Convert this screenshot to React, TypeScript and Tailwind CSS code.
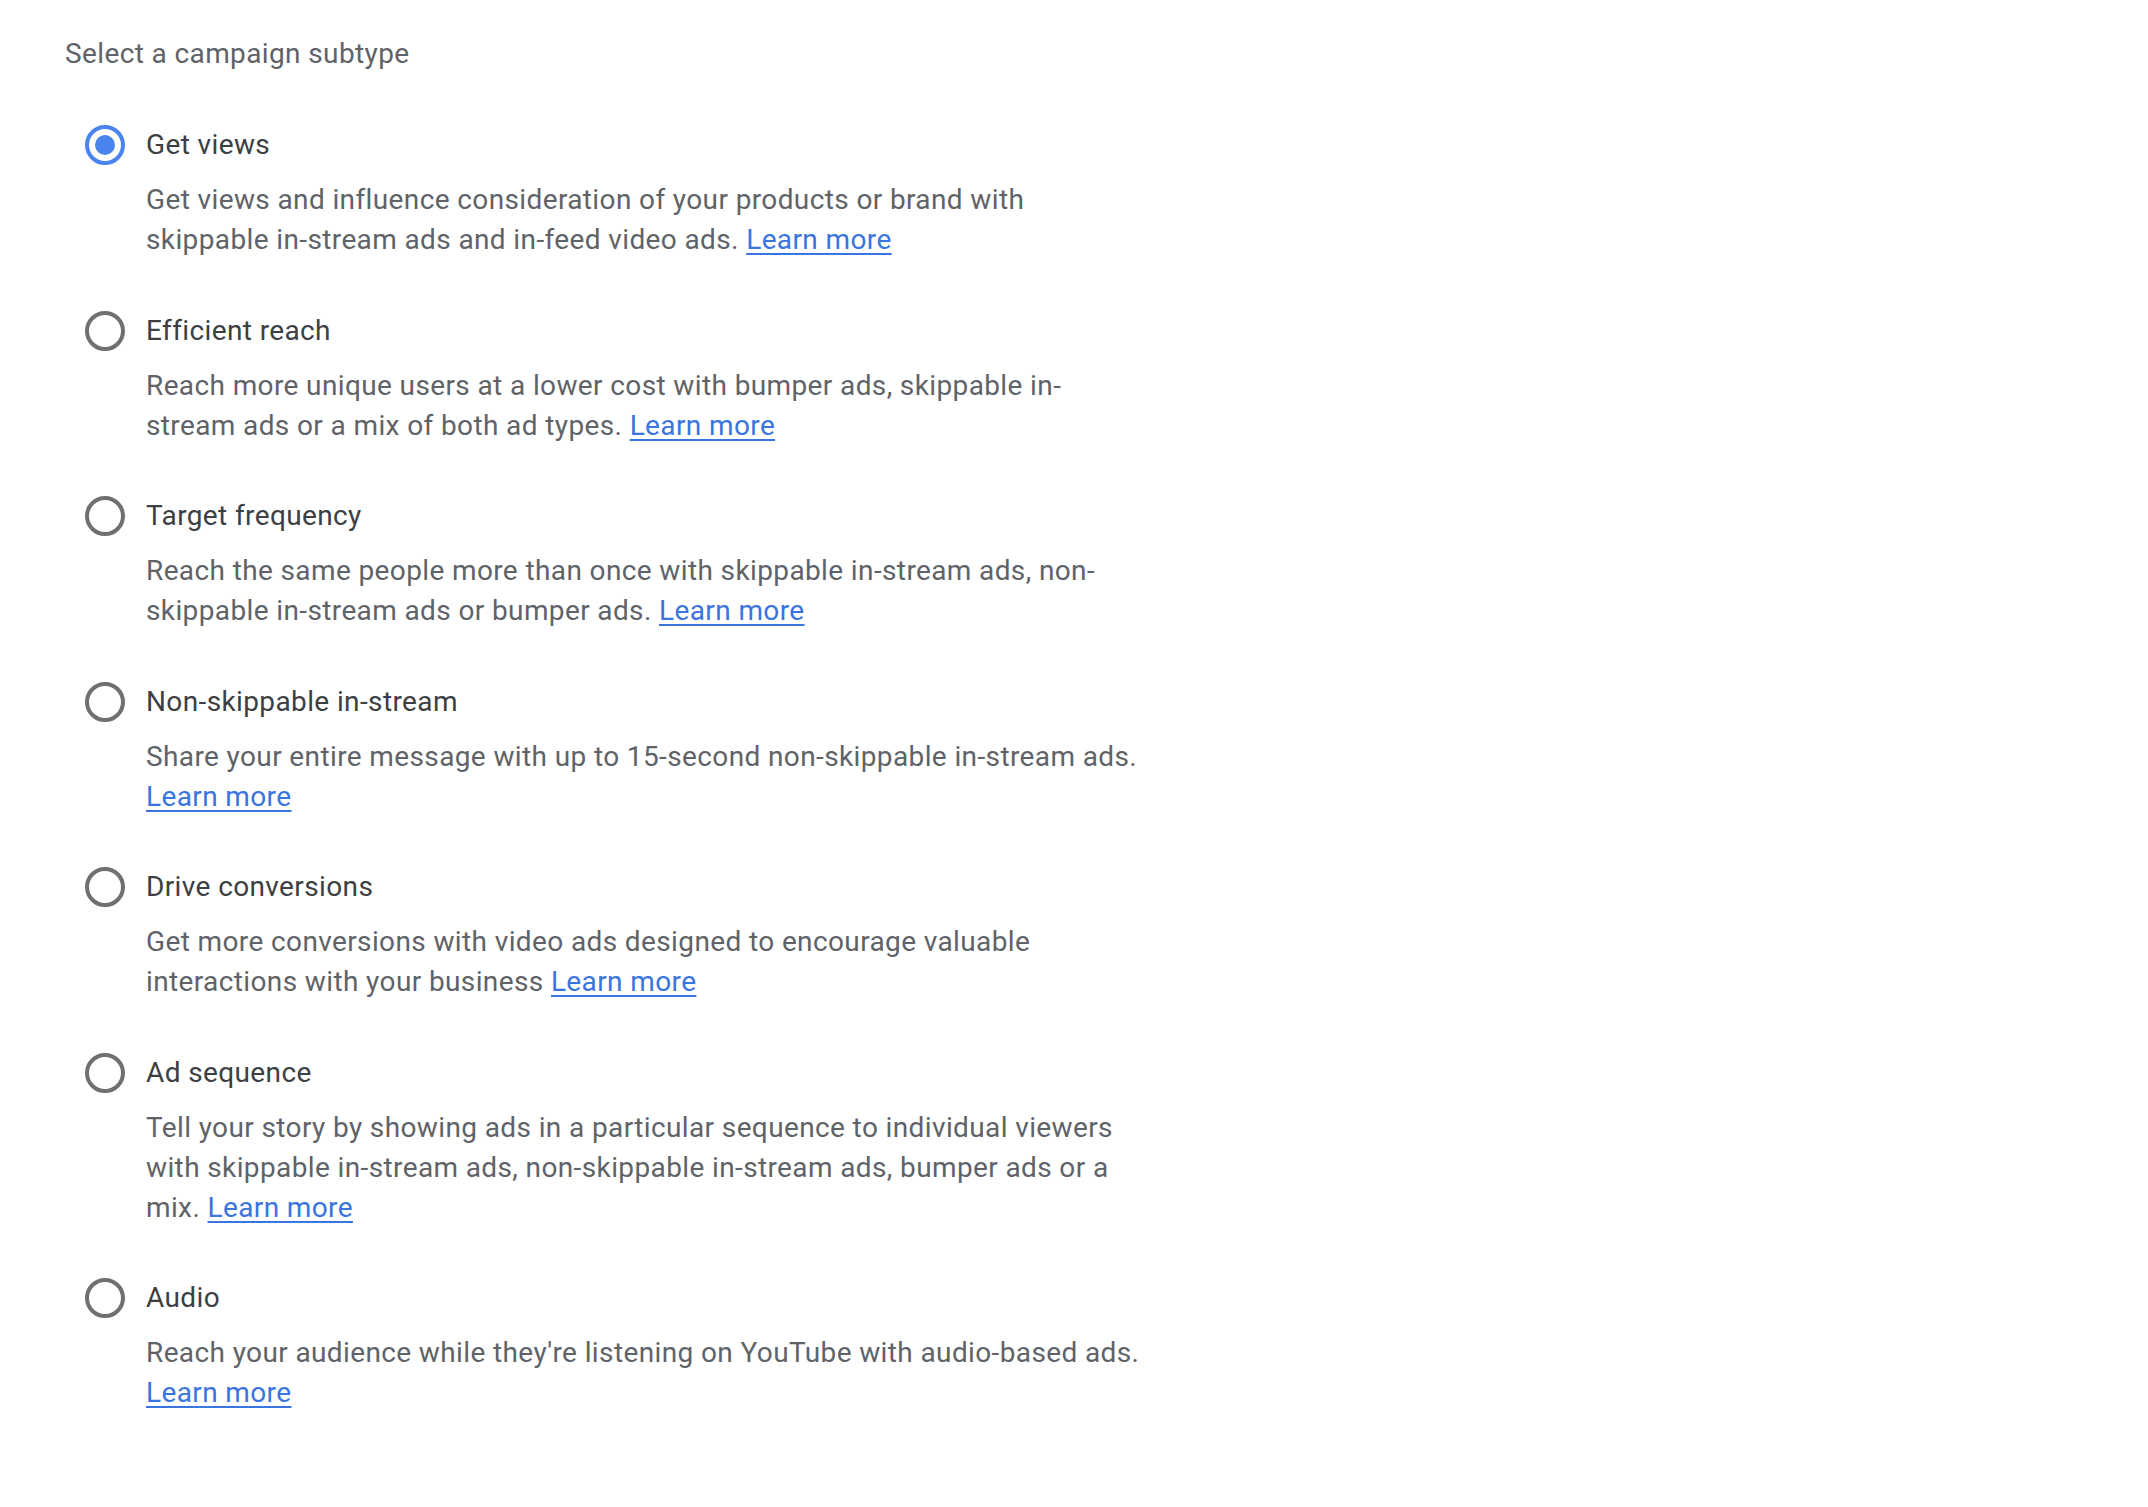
import React, { useState } from 'react';

type Option = {
  id: string;
  label: string;
  description: string;
};

const OPTIONS: Option[] = [
  {
    id: 'views',
    label: 'Get views',
    description:
      'Get views and influence consideration of your products or brand with skippable in-stream ads and in-feed video ads.',
  },
  {
    id: 'reach',
    label: 'Efficient reach',
    description:
      'Reach more unique users at a lower cost with bumper ads, skippable in-stream ads or a mix of both ad types.',
  },
  {
    id: 'frequency',
    label: 'Target frequency',
    description:
      'Reach the same people more than once with skippable in-stream ads, non-skippable in-stream ads or bumper ads.',
  },
  {
    id: 'nonskip',
    label: 'Non-skippable in-stream',
    description: 'Share your entire message with up to 15-second non-skippable in-stream ads.',
  },
  {
    id: 'conversions',
    label: 'Drive conversions',
    description:
      'Get more conversions with video ads designed to encourage valuable interactions with your business',
  },
  {
    id: 'sequence',
    label: 'Ad sequence',
    description:
      'Tell your story by showing ads in a particular sequence to individual viewers with skippable in-stream ads, non-skippable in-stream ads, bumper ads or a mix.',
  },
  {
    id: 'audio',
    label: 'Audio',
    description: "Reach your audience while they're listening on YouTube with audio-based ads.",
  },
];

const Radio: React.FC<{ checked: boolean }> = ({ checked }) => (
  <div
    className={`w-[40px] h-[40px] shrink-0 rounded-full border-[4px] flex items-center justify-center ${
      checked ? 'border-[#4a84ee]' : 'border-[#707070]'
    }`}
  >
    {checked && <div className="w-[20px] h-[20px] rounded-full bg-[#4a84ee]" />}
  </div>
);

export default function App() {
  const [selected, setSelected] = useState('views');

  return (
    <div className="min-h-screen bg-white font-['Roboto',sans-serif] text-[28px] leading-[40px] tracking-[0.38px]">
      <div className="pl-[65px] pt-[34px]">
        <div className="text-[#5f6368]">Select a campaign subtype</div>

        <div className="mt-[51px] pl-[20px] flex flex-col gap-[50.5px]">
          {OPTIONS.map((opt) => (
            <div key={opt.id} className="flex flex-col">
              <label
                className="flex items-center gap-[21px] cursor-pointer"
                onClick={() => setSelected(opt.id)}
              >
                <Radio checked={selected === opt.id} />
                <span className="text-[#3c4043]">{opt.label}</span>
              </label>
              <p className="mt-[15px] ml-[61px] w-[1000px] text-[#5f6368]">
                {opt.description}{' '}
                <a href="#" className="text-[#3a74de] underline underline-offset-[4px] decoration-[2px]">
                  Learn more
                </a>
              </p>
            </div>
          ))}
        </div>
      </div>
    </div>
  );
}
